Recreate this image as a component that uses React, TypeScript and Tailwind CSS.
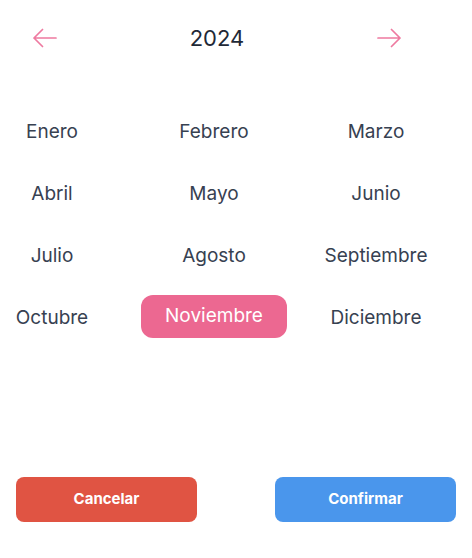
const months = [
  "Enero", "Febrero", "Marzo",
  "Abril", "Mayo", "Junio",
  "Julio", "Agosto", "Septiembre",
  "Octubre", "Noviembre", "Diciembre",
];

function Arrow({ dir }: { dir: "left" | "right" }) {
  return (
    <svg width="24" height="24" viewBox="0 0 24 24" fill="none" stroke="#ee7aa0" strokeWidth="1.7" strokeLinecap="round" strokeLinejoin="round">
      {dir === "left" ? (
        <path d="M23 12H1M9.5 3.5L1 12l8.5 8.5" />
      ) : (
        <path d="M1 12h22M14.5 3.5L23 12l-8.5 8.5" />
      )}
    </svg>
  );
}

export default function App() {
  const selected = "Noviembre";

  return (
    <div className="w-[472px] h-[558px] bg-white flex flex-col" style={{ fontFamily: "Inter, 'Noto Sans', sans-serif" }}>
      <div className="flex items-center h-[76px] pl-[33px]">
        <button className="w-[24px] h-[24px] flex items-center justify-center">
          <Arrow dir="left" />
        </button>
        <div className="w-[320px] text-center text-[22px] text-[#1f2937]">2024</div>
        <button className="w-[24px] h-[24px] flex items-center justify-center">
          <Arrow dir="right" />
        </button>
      </div>

      <div className="grid grid-cols-[104px_220px_104px] mt-[25px]">
        {months.map((m) => (
          <div key={m} className="h-[62px] flex items-center justify-center">
            {m === selected ? (
              <span className="w-[146px] h-[43px] -mt-[4px] rounded-xl bg-[#ec6891] text-white text-[19px] flex items-center justify-center">
                {m}
              </span>
            ) : (
              <span className="text-[19px] text-[#374151] whitespace-nowrap">{m}</span>
            )}
          </div>
        ))}
      </div>

      <div className="mt-auto mb-[36px] flex justify-between px-4">
        <button className="w-[181px] h-[45px] rounded-lg bg-[#e05443] text-white font-bold text-[15px]">
          Cancelar
        </button>
        <button className="w-[181px] h-[45px] rounded-lg bg-[#4a96ec] text-white font-bold text-[15px]">
          Confirmar
        </button>
      </div>
    </div>
  );
}
